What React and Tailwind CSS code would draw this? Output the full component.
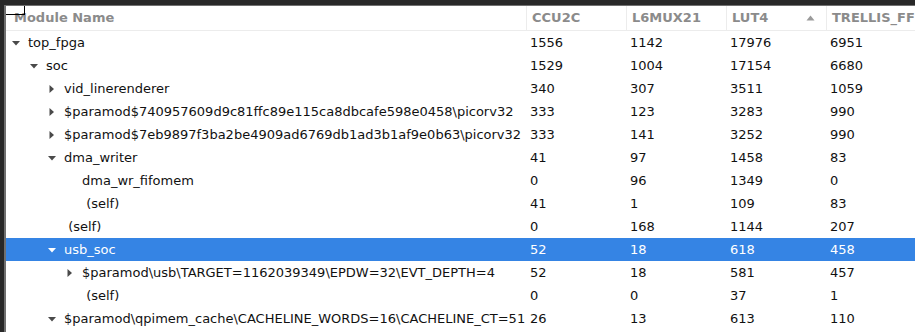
import React from "react";

const rows = [
  { name: "top_fpga", level: 0, exp: "down", v: ["1556", "1142", "17976", "6951"] },
  { name: "soc", level: 1, exp: "down", v: ["1529", "1004", "17154", "6680"] },
  { name: "vid_linerenderer", level: 2, exp: "right", v: ["340", "307", "3511", "1059"] },
  { name: "$paramod$740957609d9c81ffc89e115ca8dbcafe598e0458\\picorv32", level: 2, exp: "right", v: ["333", "123", "3283", "990"] },
  { name: "$paramod$7eb9897f3ba2be4909ad6769db1ad3b1af9e0b63\\picorv32", level: 2, exp: "right", v: ["333", "141", "3252", "990"] },
  { name: "dma_writer", level: 2, exp: "down", v: ["41", "97", "1458", "83"] },
  { name: "dma_wr_fifomem", level: 3, exp: null, v: ["0", "96", "1349", "0"] },
  { name: " (self)", level: 3, exp: null, v: ["41", "1", "109", "83"] },
  { name: " (self)", level: 2, exp: null, v: ["0", "168", "1144", "207"] },
  { name: "usb_soc", level: 2, exp: "down", v: ["52", "18", "618", "458"], sel: true },
  { name: "$paramod\\usb\\TARGET=1162039349\\EPDW=32\\EVT_DEPTH=4", level: 3, exp: "right", v: ["52", "18", "581", "457"] },
  { name: " (self)", level: 3, exp: null, v: ["0", "0", "37", "1"] },
  { name: "$paramod\\qpimem_cache\\CACHELINE_WORDS=16\\CACHELINE_CT=51", level: 2, exp: "down", v: ["26", "13", "613", "110"] },
];

function Expander({ dir, sel }) {
  const fill = sel ? "#ffffff" : "#4a4a4a";
  if (dir === "down")
    return (
      <svg width="12" height="12" viewBox="0 0 12 12">
        <path d="M2 4 L10 4 L6 8.5 Z" fill={fill} />
      </svg>
    );
  if (dir === "right")
    return (
      <svg width="12" height="12" viewBox="0 0 12 12">
        <path d="M3.5 2 L8 6 L3.5 10 Z" fill={fill} />
      </svg>
    );
  return <span className="inline-block w-[12px]" />;
}

const cols = "grid grid-cols-[520px_100px_100px_100px_100px]";

export default function App() {
  return (
    <div
      className="w-[915px] h-[332px] bg-[#282828] pt-[5px] pl-[4px] overflow-hidden"
      style={{ fontFamily: '"DejaVu Sans", sans-serif' }}
    >
      <div className="relative w-[911px] h-[327px] bg-white border-t border-l-2 border-[#707070] overflow-hidden text-[13px]">
        <div className="absolute left-0 top-0 w-[19px] h-[9px] border-b border-r border-black z-10" />
        <div className={`${cols} h-[25px] border-b border-[#ececec] font-bold text-[#8b8b8b]`}>
          <div className="pl-[8px] flex items-center">Module Name</div>
          <div className="border-l border-[#ececec] pl-[5px] flex items-center">CCU2C</div>
          <div className="border-l border-[#ececec] pl-[5px] flex items-center">L6MUX21</div>
          <div className="border-l border-[#ececec] pl-[5px] flex items-center justify-between pr-[11px]">
            <span>LUT4</span>
            <svg width="9" height="6" viewBox="0 0 9 6">
              <path d="M0.5 5.5 L4.5 0.5 L8.5 5.5 Z" fill="#9a9a9a" />
            </svg>
          </div>
          <div className="border-l border-[#ececec] pl-[5px] flex items-center whitespace-nowrap">TRELLIS_FF</div>
        </div>
        {rows.map((r, i) => (
          <div
            key={i}
            className={`${cols} h-[23px] items-center ${r.sel ? "bg-[#3584e4] text-white" : "text-[#111]"}`}
          >
            <div className="flex items-center pl-[4px] overflow-hidden whitespace-pre">
              <span style={{ width: r.level * 18 }} className="shrink-0" />
              <span className="shrink-0 flex items-center">
                <Expander dir={r.exp} sel={r.sel} />
              </span>
              <span className="ml-[6px]">{r.name}</span>
            </div>
            {r.v.map((x, j) => (
              <div key={j} className="pl-[4px]">{x}</div>
            ))}
          </div>
        ))}
      </div>
    </div>
  );
}
